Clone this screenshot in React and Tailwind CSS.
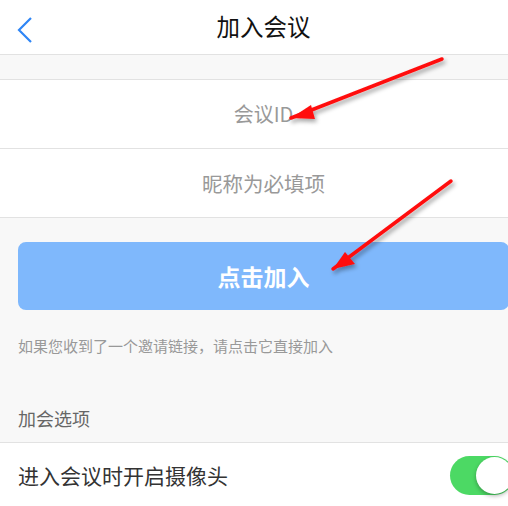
import React, { useState } from "react";

const font = { fontFamily: '"Noto Sans CJK SC", "Noto Sans", sans-serif' };

const Arrow = ({ x1, y1, x2, y2, w1, w2 }) => (
  <g>
    <line x1={x1} y1={y1} x2={x2} y2={y2} stroke="#ff1010" strokeWidth="3.5" strokeLinecap="round" />
    <polygon points={`${x2},${y2} ${w1[0]},${w1[1]} ${w2[0]},${w2[1]}`} fill="#ff1010" />
  </g>
);

const App = () => {
  const [camera, setCamera] = useState(true);

  return (
    <div className="relative w-[508px] h-[506px] overflow-hidden bg-[#f8f8f8]" style={font}>
      <div className="w-[527px]">
        {/* Header */}
        <div className="relative flex items-center justify-center h-[55px] bg-white border-b border-[#e2e2e2]">
          <button className="absolute left-[14px] top-[14px] p-[2px]">
            <svg width="18" height="28" viewBox="0 0 18 28">
              <polyline points="15,2 3,14 15,26" fill="none" stroke="#2f86f6" strokeWidth="2.2" />
            </svg>
          </button>
          <h1 className="text-[23.5px] text-[#111] leading-none">加入会议</h1>
        </div>

        <div className="h-[25px] border-b border-[#e2e2e2]" />

        {/* Inputs */}
        <div className="bg-white">
          <div className="flex items-center justify-center h-[69px] border-b border-[#e2e2e2] text-[20px] text-[#999]">
            会议ID
          </div>
          <div className="flex items-center justify-center h-[69px] border-b border-[#e2e2e2] text-[20.5px] text-[#999]">
            昵称为必填项
          </div>
        </div>

        {/* Button */}
        <div className="pt-[24px] px-[18px]">
          <button className="w-full h-[68px] rounded-[8px] bg-[#7fb8fc] text-white text-[23px] font-semibold">
            点击加入
          </button>
        </div>

        <p className="mt-[25px] px-[18px] text-[15px] text-[#999]">如果您收到了一个邀请链接，请点击它直接加入</p>

        <div className="mt-[47px] px-[18px] h-[38px] text-[18px] text-[#666] border-b border-[#e2e2e2]">加会选项</div>

        <div className="flex items-center justify-between bg-white h-[66px] pl-[18px] pr-[13px]">
          <span className="text-[21px] text-[#333]">进入会议时开启摄像头</span>
          <button
            onClick={() => setCamera(!camera)}
            className="relative w-[64px] h-[39px] rounded-full bg-[#4cd964]"
          >
            <span className="absolute right-[1px] top-[1px] w-[37px] h-[37px] rounded-full bg-white shadow-[0_2px_4px_rgba(0,0,0,0.3)]" />
          </button>
        </div>
      </div>

      {/* Annotation arrows */}
      <svg className="absolute inset-0 pointer-events-none" width="508" height="506">
        <defs>
          <filter id="sh" x="-10%" y="-10%" width="130%" height="130%">
            <feDropShadow dx="2" dy="3" stdDeviation="2" floodColor="#000" floodOpacity="0.35" />
          </filter>
        </defs>
        <g filter="url(#sh)">
          <Arrow x1={442} y1={59} x2={291} y2={118} w1={[311, 105]} w2={[315, 119]} />
          <Arrow x1={451} y1={181} x2={333} y2={269} w1={[345, 252]} w2={[355, 264]} />
        </g>
      </svg>
    </div>
  );
};

export default App;
